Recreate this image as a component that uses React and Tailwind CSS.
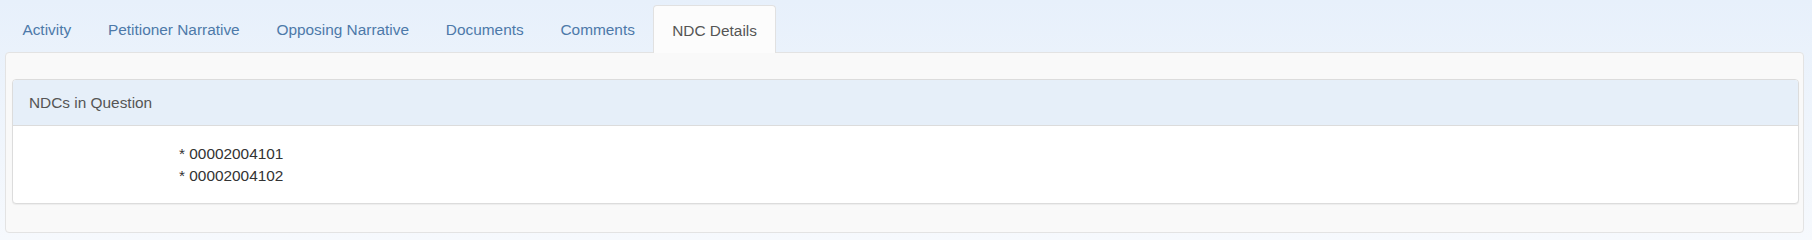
const tabs = ['Activity', 'Petitioner Narrative', 'Opposing Narrative', 'Documents', 'Comments', 'NDC Details']

export default function App() {
  const active = 'NDC Details'
  const ndcs = ['00002004101', '00002004102']

  return (
    <div className="w-[1812px] h-[240px] bg-gradient-to-b from-[#e7f0fb] to-[#f6f9fd] font-['Liberation_Sans',Arial,sans-serif] text-[15.4px] pt-[5px] pl-[4px] pr-[8px]">
      <ul className="flex h-[47px]">
        {tabs.map((t) => (
          <li key={t}>
            {t === active ? (
              <a className="relative z-10 flex items-center h-[48px] px-[18px] pt-[2px] text-[#555] bg-[#fcfcfc] border border-[#e1e1e1] border-b-0 rounded-t-[4px] cursor-default">
                {t}
              </a>
            ) : (
              <a className="flex items-center h-[47px] px-[18.4px] pt-[2px] text-[#4d79a9] cursor-pointer">
                {t}
              </a>
            )}
          </li>
        ))}
      </ul>
      <div className="ml-[1px] bg-[#f9f9f9] border border-[#e3e3e3] rounded-[4px] h-[181px] pt-[26px] pl-[6px] pr-[4px]">
        <div className="bg-white border border-[#dcdcdc] rounded-[4px] shadow-[0_1px_1px_rgba(0,0,0,0.05)]">
          <div className="h-[46px] flex items-center px-[16px] bg-[#e6eff9] border-b border-[#dcdcdc] rounded-t-[3px] text-[#555]">
            NDCs in Question
          </div>
          <div className="h-[77px] pt-[17px] pl-[166px] text-[#333] leading-[22px]">
            {ndcs.map((n) => (
              <div key={n}>* {n}</div>
            ))}
          </div>
        </div>
      </div>
    </div>
  )
}
